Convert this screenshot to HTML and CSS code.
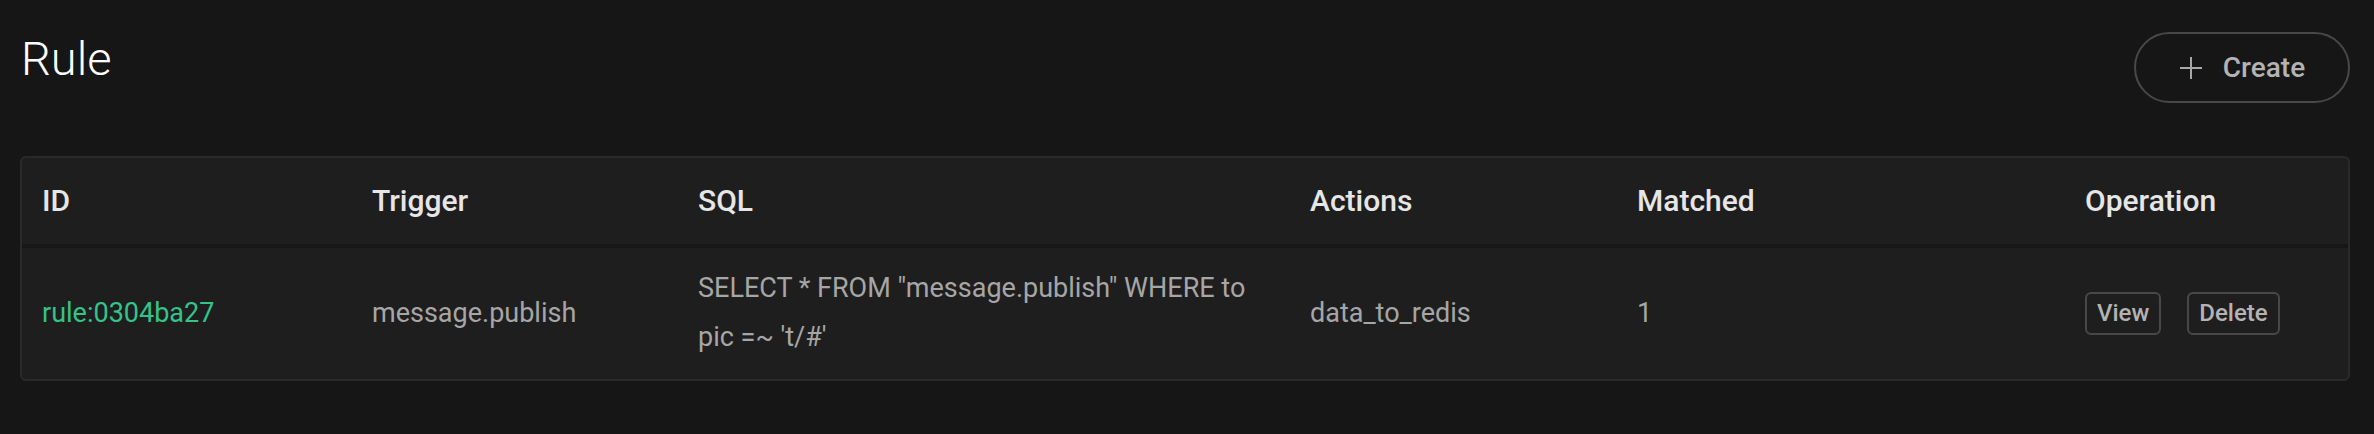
FILE: index.html
```html
<!DOCTYPE html>
<html lang="en">
<head>
<meta charset="utf-8">
<title>Rule</title>
<link rel="stylesheet" href="styles.css">
</head>
<body>
<div class="page">
  <div class="page-header">
    <h1 class="page-title">Rule</h1>
    <button class="btn-create" type="button">
      <svg class="plus-icon" viewBox="0 0 24 24" width="24" height="24" aria-hidden="true">
        <path d="M12 1V23M1 12H23" stroke="currentColor" stroke-width="2" fill="none"/>
      </svg>
      <span>Create</span>
    </button>
  </div>

  <div class="card">
    <div class="table">
      <div class="row head">
        <div class="cell">ID</div>
        <div class="cell">Trigger</div>
        <div class="cell">SQL</div>
        <div class="cell">Actions</div>
        <div class="cell">Matched</div>
        <div class="cell">Operation</div>
      </div>
      <div class="row body">
        <div class="cell"><a class="link" href="#">rule:0304ba27</a></div>
        <div class="cell">message.publish</div>
        <div class="cell sql">SELECT * FROM "message.publish" WHERE topic =~ 't/#'</div>
        <div class="cell">data_to_redis</div>
        <div class="cell">1</div>
        <div class="cell ops">
          <button class="btn-mini" type="button">View</button>
          <button class="btn-mini" type="button">Delete</button>
        </div>
      </div>
    </div>
  </div>
</div>
</body>
</html>
```
FILE: styles.css
```css
html, body {
  margin: 0;
  padding: 0;
  background: #161616;
}

body {
  font-family: Roboto, "Liberation Sans", Arial, sans-serif;
  color: #a6a6a6;
}

.page {
  padding: 0 24px 0 20px;
}

.page-header {
  display: flex;
  justify-content: space-between;
  align-items: flex-start;
  height: 156px;
}

.page-title {
  margin: 31px 0 0 1px;
  font-size: 47px;
  font-weight: 300;
  line-height: 56px;
  color: #ffffff;
}

.btn-create {
  margin-top: 32px;
  width: 216px;
  height: 71px;
  box-sizing: border-box;
  display: flex;
  align-items: center;
  justify-content: center;
  gap: 20px;
  padding: 0;
  background: transparent;
  border: 2px solid #48484b;
  border-radius: 36px;
  color: #b3b3b3;
  font-family: Roboto, "Liberation Sans", Arial, sans-serif;
  font-size: 28px;
  font-weight: 500;
  cursor: pointer;
}

.plus-icon {
  display: block;
  color: #a9a9a9;
}

.card {
  background: #1f1e1f;
  border: 2px solid #2a2a2b;
  border-radius: 6px;
  overflow: hidden;
}

.row {
  display: grid;
  grid-template-columns: 330px 326px 612px 327px 448px 1fr;
  align-items: center;
}

.cell {
  padding: 0 20px;
  box-sizing: border-box;
  min-width: 0;
}

.row.head {
  height: 86px;
  border-bottom: 4px solid #171717;
  color: #e6e6e6;
  font-size: 30px;
  font-weight: 500;
  line-height: 86px;
}

.row.body {
  padding: 16px 0 17px;
  font-size: 27px;
  line-height: 49px;
  color: #a6a6a6;
}

.sql {
  word-break: break-all;
  padding-right: 36px;
}

.link {
  color: #34c388;
  text-decoration: none;
}

.ops {
  display: flex;
  align-items: center;
  gap: 26px;
}

.btn-mini {
  height: 43px;
  box-sizing: border-box;
  padding: 0 10px;
  background: transparent;
  border: 2px solid #48484b;
  border-radius: 6px;
  color: #b3b3b3;
  font-family: Roboto, "Liberation Sans", Arial, sans-serif;
  font-size: 24px;
  font-weight: 500;
  line-height: 39px;
  cursor: pointer;
}
```
